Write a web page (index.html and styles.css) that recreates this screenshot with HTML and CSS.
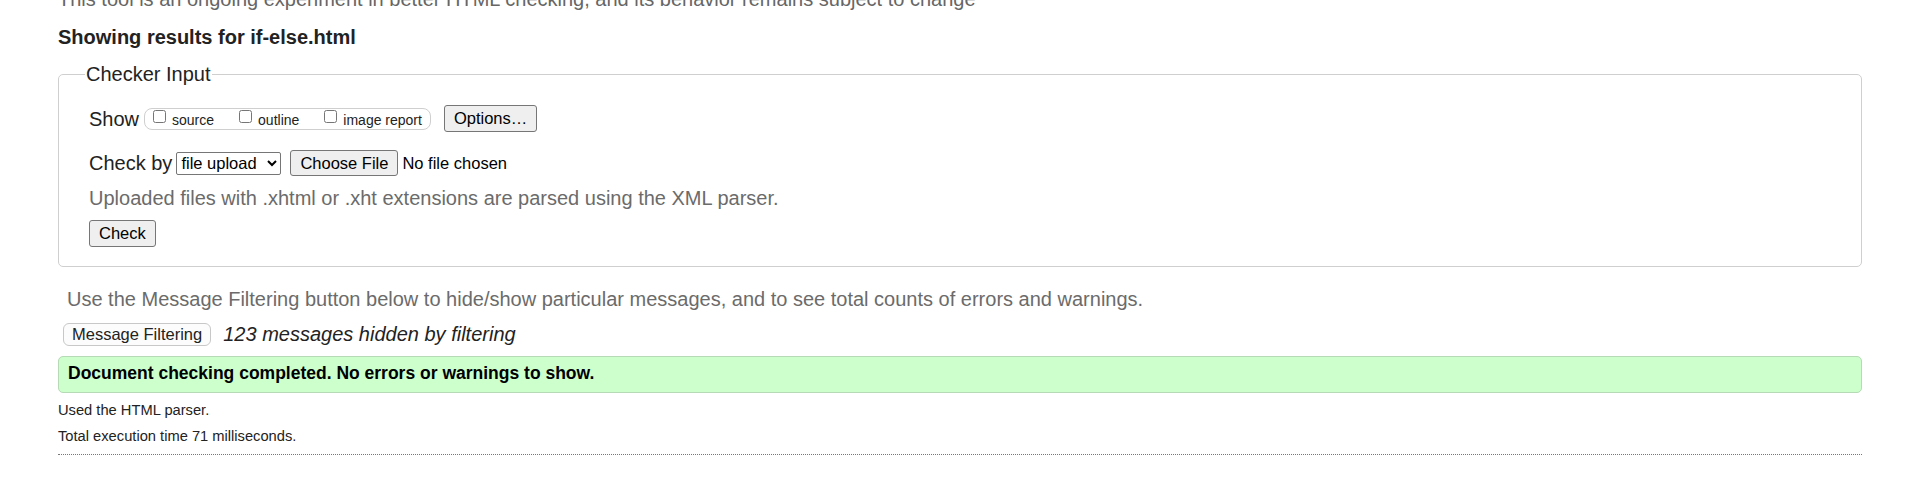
FILE: index.html
```html
<!DOCTYPE html>
<html lang="en">
<head>
<meta charset="utf-8">
<title>Showing results for if-else.html - Nu Html Checker</title>
<link rel="stylesheet" href="styles.css">
</head>
<body>
<div class="page">
  <p class="unofficial">This tool is an ongoing experiment in better HTML checking, and its behavior remains subject to change</p>
  <h2 class="results-title">Showing results for if-else.html</h2>
  <form class="checker-form">
    <fieldset class="checker">
      <legend class="checker-legend">Checker Input</legend>
      <div class="row row-show">
        <span class="label">Show</span>
        <span class="show-options">
          <label class="opt"><input type="checkbox" class="cb"><span class="opt-text">source</span></label>
          <label class="opt"><input type="checkbox" class="cb"><span class="opt-text">outline</span></label>
          <label class="opt"><input type="checkbox" class="cb"><span class="opt-text">image report</span></label>
        </span>
        <button type="button" class="btn btn-options">Options…</button>
      </div>
      <div class="row row-checkby">
        <span class="label">Check by</span>
        <select class="select"><option>file upload</option><option>address</option><option>text input</option></select>
        <input type="file" class="file">
      </div>
      <p class="hint">Uploaded files with .xhtml or .xht extensions are parsed using the XML parser.</p>
      <button type="button" class="btn btn-check">Check</button>
    </fieldset>
  </form>
  <p class="filter-note">Use the Message Filtering button below to hide/show particular messages, and to see total counts of errors and warnings.</p>
  <div class="filter-row">
    <button type="button" class="btn-filter">Message Filtering</button>
    <span class="hidden-count">123 messages hidden by filtering</span>
  </div>
  <div class="success">Document checking completed. No errors or warnings to show.</div>
  <p class="stats">Used the HTML parser.</p>
  <p class="stats stats-time">Total execution time 71 milliseconds.</p>
  <hr class="sep">
</div>
</body>
</html>
```
FILE: styles.css
```css
html, body {
  margin: 0;
  padding: 0;
  background: #fff;
}
body {
  font-family: "Liberation Sans", Arial, sans-serif;
  color: #222;
}
.page {
  padding: 0 58px;
}
.unofficial {
  margin: -13px 0 0;
  font-size: 20px;
  line-height: 24px;
  color: #666;
  white-space: nowrap;
}
.results-title {
  margin: 14px 0 0;
  font-size: 20px;
  line-height: 24px;
  font-weight: bold;
  color: #222;
}
.checker-form {
  margin: 13px 0 0;
}
.checker {
  margin: 0;
  padding: 19px 30px 19px 30px;
  border: 1px solid #cfcfcf;
  border-radius: 5px;
  min-width: 0;
}
.checker-legend {
  padding: 0 1px;
  margin-left: -4px;
  font-size: 20px;
  line-height: 24px;
  color: #222;
}
.row {
  display: flex;
  align-items: center;
}
.row-show {
  height: 27px;
}
.row-checkby {
  height: 26px;
  margin-top: 18px;
}
.label {
  font-size: 20px;
  line-height: 24px;
}
.show-options {
  display: flex;
  align-items: flex-start;
  box-sizing: border-box;
  height: 22px;
  margin-left: 5px;
  padding: 0 8px;
  border: 1px solid #cfcfcf;
  border-radius: 8px;
}
.opt {
  display: flex;
  align-items: flex-start;
}
.opt + .opt {
  margin-left: 25px;
}
.cb {
  width: 13px;
  height: 13px;
  margin: 1px 0 0 0;
}
.opt-text {
  margin-left: 6px;
  padding-top: 3px;
  font-size: 14px;
  line-height: 16px;
}
.btn {
  font-family: "Liberation Sans", Arial, sans-serif;
  font-size: 16.5px;
  line-height: 19px;
  height: 27px;
  padding: 0 9px;
  background: #efefef;
  border: 1px solid #767676;
  border-radius: 3px;
  color: #000;
}
.btn-options {
  margin-left: 13px;
}
.select {
  box-sizing: border-box;
  width: 105px;
  height: 23px;
  margin-left: 4px;
  font-family: "Liberation Sans", Arial, sans-serif;
  font-size: 16.5px;
  color: #000;
  background: #fff;
  border: 1px solid #767676;
  border-radius: 2px;
}
.file {
  margin-left: 9px;
  font-family: "Liberation Sans", Arial, sans-serif;
  font-size: 16.5px;
  color: #000;
}
.file::file-selector-button {
  font: inherit;
  height: 26px;
  padding: 0 9px;
  margin: 0 4px 0 0;
  background: #efefef;
  border: 1px solid #767676;
  border-radius: 3px;
  color: #000;
}
.hint {
  margin: 10px 0 0;
  font-size: 20px;
  line-height: 24px;
  color: #6b6b6b;
}
.btn-check {
  display: block;
  margin-top: 10px;
}
.filter-note {
  margin: 20px 0 0 9px;
  font-size: 20px;
  line-height: 24px;
  color: #6b6b6b;
}
.filter-row {
  display: flex;
  align-items: center;
  height: 24px;
  margin: 11px 0 0 5px;
}
.btn-filter {
  font-family: "Liberation Sans", Arial, sans-serif;
  font-size: 16.5px;
  line-height: 19px;
  height: 23px;
  padding: 0 8px;
  background: #fcfcfc;
  border: 1px solid #c8c8c8;
  border-radius: 6px;
  color: #222;
}
.hidden-count {
  margin-left: 12px;
  font-size: 20px;
  line-height: 24px;
  font-style: italic;
  color: #222;
}
.success {
  margin-top: 10px;
  padding: 6px 9px 8px;
  background: #ccffcc;
  border: 1px solid #b5dab5;
  border-radius: 5px;
  font-size: 17.5px;
  line-height: 21px;
  font-weight: bold;
  color: #000;
}
.stats {
  margin: 8px 0 0;
  font-size: 14.7px;
  line-height: 18px;
  color: #222;
}
.stats-time {
  margin-top: 8px;
}
.sep {
  margin: 9px 0 0;
  height: 0;
  border: 0;
  border-top: 1px dotted #777;
}
```
